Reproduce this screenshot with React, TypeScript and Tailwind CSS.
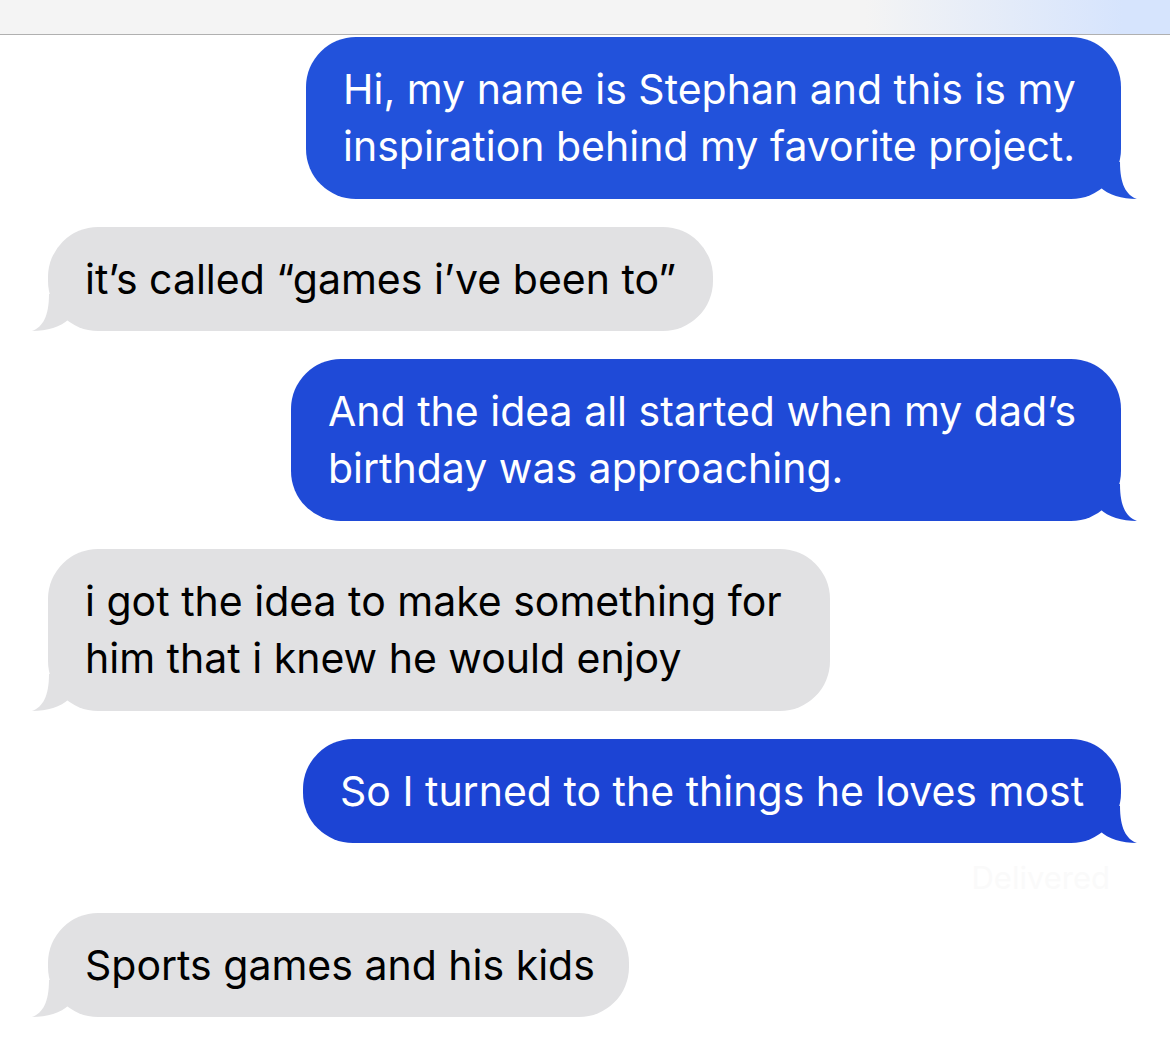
import React from 'react';

type Msg = {
  from: 'me' | 'them';
  lines: string[];
  width: number;
  color?: string;
};

const messages: Msg[] = [
  {
    from: 'me',
    lines: ['Hi, my name is Stephan and this is my', 'inspiration behind my favorite project.'],
    width: 815,
    color: '#2252db',
  },
  { from: 'them', lines: ['it’s called “games i’ve been to”'], width: 665 },
  {
    from: 'me',
    lines: ['And the idea all started when my dad’s', 'birthday was approaching.'],
    width: 830,
    color: '#1f4ad7',
  },
  {
    from: 'them',
    lines: ['i got the idea to make something for', 'him that i knew he would enjoy'],
    width: 782,
  },
  { from: 'me', lines: ['So I turned to the things he loves most'], width: 818, color: '#1c44d4' },
];

function Tail({ side, color }: { side: 'left' | 'right'; color: string }) {
  const isRight = side === 'right';
  return (
    <svg
      width="58"
      height="38"
      viewBox="0 0 58 38"
      className={`absolute bottom-[-1px] ${isRight ? 'right-[-17px]' : 'left-[-17px] -scale-x-100'}`}
    >
      <path d="M20 25 C28 33 42 37 57 37 C46 33 40 22 40 0 L20 0 Z" fill={color} />
    </svg>
  );
}

function Bubble({ msg }: { msg: Msg }) {
  const isMe = msg.from === 'me';
  const color = isMe ? msg.color ?? '#2050d9' : '#e1e1e3';
  const single = msg.lines.length === 1;
  return (
    <div className={`flex ${isMe ? 'justify-end pr-[49px]' : 'justify-start pl-[48px]'}`}>
      <div
        className={`relative rounded-[50px] pl-[37px] ${single ? 'h-[104px] py-[23.5px]' : 'h-[162px] py-[24px]'} ${
          isMe ? 'text-white' : 'text-black'
        }`}
        style={{ width: msg.width, backgroundColor: color }}
      >
        <div className="relative z-10 text-[41px] leading-[57px] whitespace-nowrap">
          {msg.lines.map((l, i) => (
            <div key={i}>{l}</div>
          ))}
        </div>
        <Tail side={isMe ? 'right' : 'left'} color={color} />
      </div>
    </div>
  );
}

export default function App() {
  return (
    <div className="w-[1170px] h-[1045px] overflow-hidden bg-white font-['Inter',sans-serif]">
      <div className="h-[35px] border-b border-[#b0b0b0] bg-[linear-gradient(to_right,#f4f4f4_74%,#d6e4fd_96%)]" />
      <div className="flex flex-col gap-[28px] pt-[2px]">
        {messages.map((m, i) => (
          <Bubble key={i} msg={m} />
        ))}
      </div>
      <div className="h-[70px] flex items-center justify-end pr-[60px] text-[31px] text-[#fafafa]">
        Delivered
      </div>
      <Bubble msg={{ from: 'them', lines: ['Sports games and his kids'], width: 581 }} />
    </div>
  );
}
